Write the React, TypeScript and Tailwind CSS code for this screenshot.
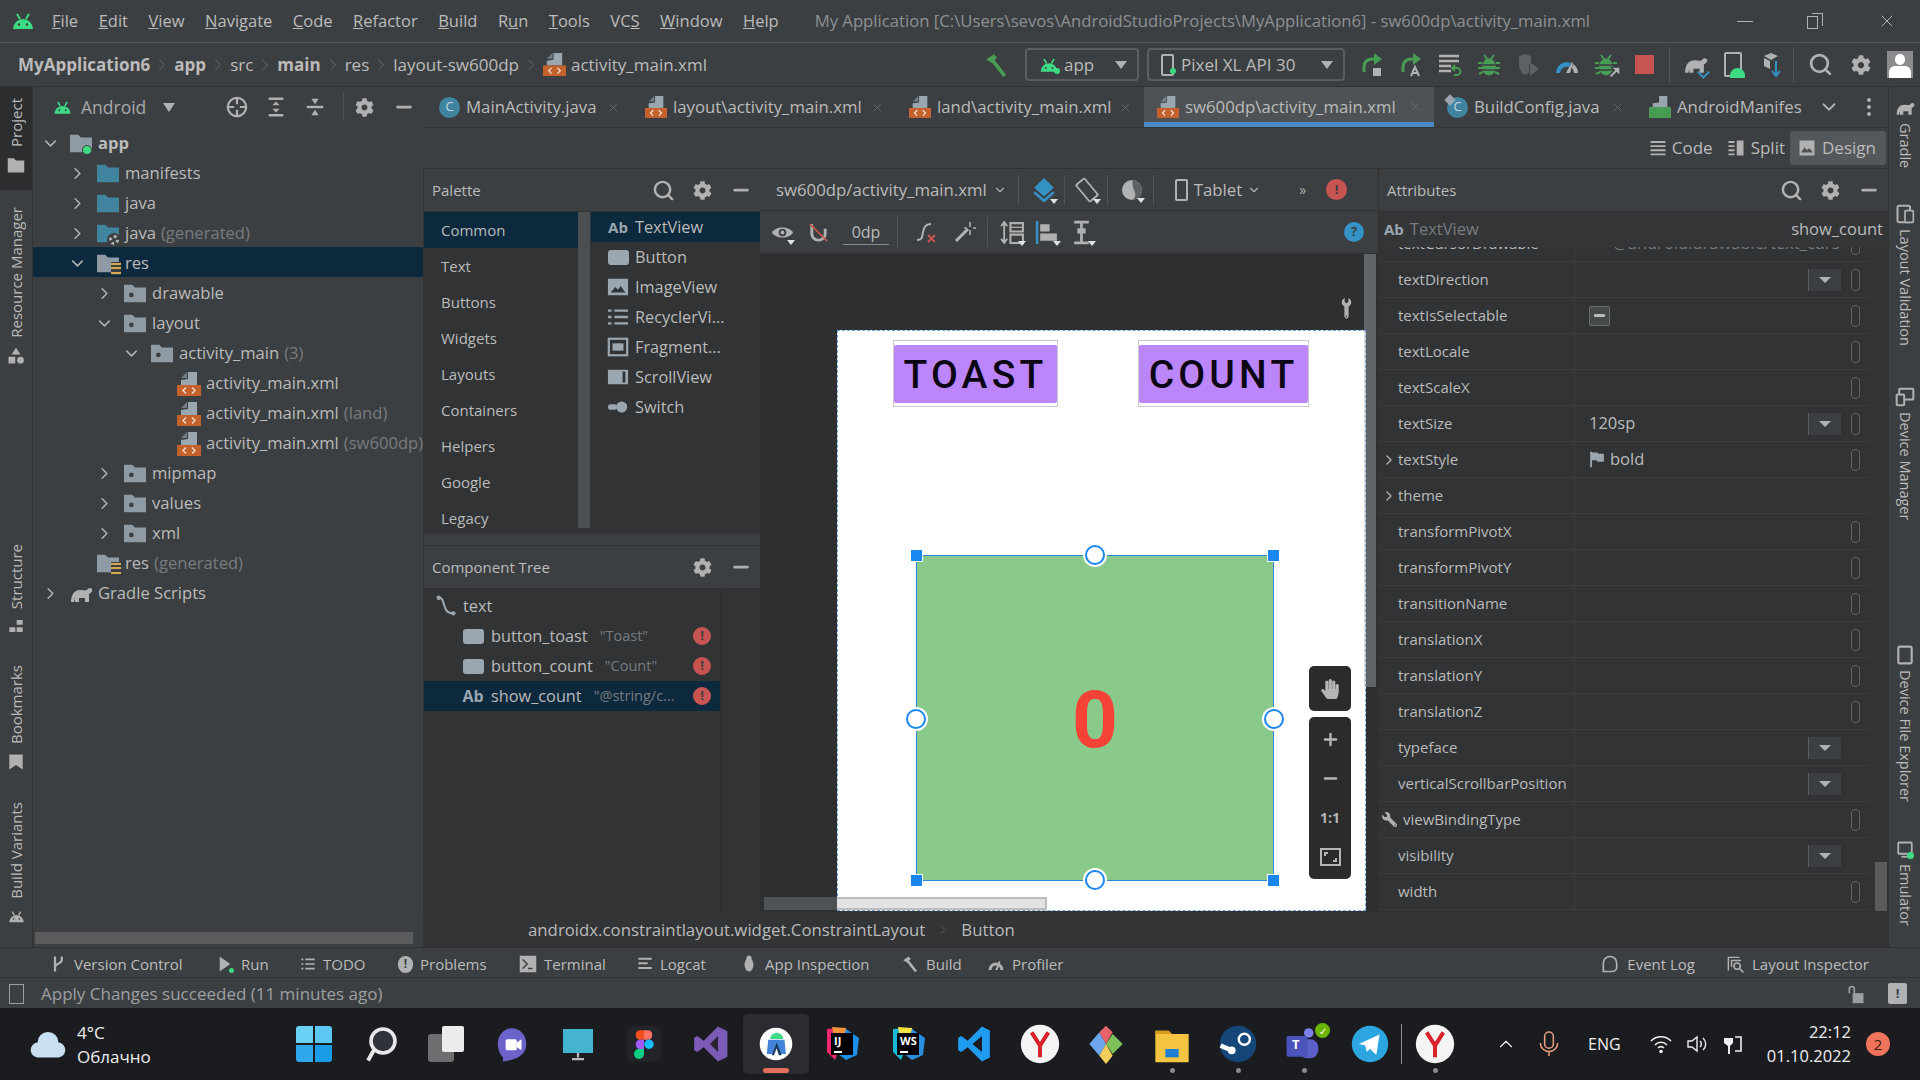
import { ChevronDown, ChevronRight, Minus, Plus, Search, X } from "lucide-react";
import { FaCog, FaHandPaper, FaWrench } from "react-icons/fa";
import type { ReactNode } from "react";

/* small IDE icons, all drawn in a 24 box */
function Svg({ s = 20, className = "", children }: { s?: number; className?: string; children: ReactNode }) {
  return (
    <svg width={s} height={s} viewBox="0 0 24 24" fill="none" className={`shrink-0 ${className}`}>
      {children}
    </svg>
  );
}

function Droid({ s = 20, c = "#3ddc84" }: { s?: number; c?: string }) {
  return (
    <Svg s={s}>
      <path d="M2 20a10 10 0 0 1 20 0z" fill={c} />
      <path d="M6 5l3 5M18 5l-3 5" stroke={c} strokeWidth="2" />
      <circle cx="8" cy="15.5" r="1.2" fill="#3c3f41" />
      <circle cx="16" cy="15.5" r="1.2" fill="#3c3f41" />
    </Svg>
  );
}

function XmlFile({ s = 24 }: { s?: number }) {
  return (
    <Svg s={s}>
      <path d="M11 0h9v13H4V8l7-1z" fill="#9aa7b0" />
      <path d="M10 0v6H4z" fill="#9aa7b0" opacity="0.6" />
      <rect x="0" y="13" width="24" height="11" fill="#c4622d" />
      <path d="M9 15.5l-3 3 3 3M15 15.5l3 3-3 3" stroke="#f3ddcf" strokeWidth="1.4" />
    </Svg>
  );
}

function ClassIcon({ tilt = false }: { tilt?: boolean }) {
  return (
    <div className="relative flex h-[21px] w-[21px] shrink-0 items-center justify-center rounded-full bg-[#40849f] text-[13px] text-[#c7dbe4]">
      C
      {tilt && <span className="absolute -left-px -top-px h-2 w-2 rotate-45 bg-[#9aa7b0]" />}
    </div>
  );
}

function Folder({ c = "#8e9ba5", dot = false, badge }: { c?: string; dot?: boolean; badge?: ReactNode }) {
  return (
    <div className="relative h-[22px] w-[22px] shrink-0">
      <Svg s={22}>
        <path d="M0 2h9l3 3h12v16H0z" fill={c} />
        {dot && <circle cx="8" cy="13" r="2.6" fill="#3c3f41" />}
      </Svg>
      {badge}
    </div>
  );
}

const StackBadge = () => (
  <div className="absolute -right-[2px] bottom-0 flex h-[13px] w-[10px] flex-col justify-between bg-[#3c3f41] py-px">
    <span className="h-[2px] bg-[#d5a84f]" />
    <span className="h-[2px] bg-[#d5a84f]" />
    <span className="h-[2px] bg-[#d5a84f]" />
  </div>
);

function Elephant({ s = 24, c = "#afb1b3" }: { s?: number; c?: string }) {
  return (
    <Svg s={s}>
      <path d="M2 20c0-7 3-12 9-12 3 0 5 1 7 0 1-2 3-3 5-1 1 2-1 4-3 5v8h-4v-4h-6v4H6v-4l-1 4z" fill={c} />
    </Svg>
  );
}

function ErrorDot({ s = 18 }: { s?: number }) {
  return (
    <div
      className="flex shrink-0 items-center justify-center rounded-full bg-[#c75450] text-[13px] font-bold text-[#3c3f41]"
      style={{ width: s, height: s }}
    >
      !
    </div>
  );
}

const Gear = ({ s = 18 }: { s?: number }) => <FaCog size={s} className="shrink-0 text-[#afb1b3]" />;
const Dash = () => <Minus size={22} strokeWidth={3} className="shrink-0 text-[#afb1b3]" />;
const Find = ({ s = 23 }: { s?: number }) => <Search size={s} strokeWidth={2.6} className="shrink-0 text-[#afb1b3]" />;

const Hammer = ({ s = 24, c = "#499c54" }: { s?: number; c?: string }) => (
  <Svg s={s}>
    <path d="M3 7l7-5 3 3-5 5z" fill={c} />
    <path d="M9 8l11 14" stroke={c} strokeWidth="3.5" />
  </Svg>
);

function Bug({ s = 24 }: { s?: number }) {
  return (
    <Svg s={s}>
      <ellipse cx="12" cy="14" rx="7" ry="8.5" fill="#499c54" />
      <path d="M7 2l3 4M17 2l-3 4M1 10h4M19 10h4M1 15h4M19 15h4M2 21l4-2M22 21l-4-2" stroke="#499c54" strokeWidth="2" />
      <path d="M5 12h14M5 17h14" stroke="#3c3f41" strokeWidth="1.5" />
    </Svg>
  );
}

const MENU: [string, string, string][] = [
  ["", "F", "ile"],
  ["", "E", "dit"],
  ["", "V", "iew"],
  ["", "N", "avigate"],
  ["", "C", "ode"],
  ["", "R", "efactor"],
  ["", "B", "uild"],
  ["R", "u", "n"],
  ["", "T", "ools"],
  ["VC", "S", ""],
  ["", "W", "indow"],
  ["", "H", "elp"],
];

function TitleBar() {
  return (
    <div className="flex h-[43px] shrink-0 items-center border-b border-[#55585a] bg-[#3c3f41] pl-[11px] text-[16.5px]">
      <Droid s={24} />
      <div className="ml-[17px] flex gap-[20.5px] text-[#bbbbbb]">
        {MENU.map(([a, u, b]) => (
          <span key={a + u + b}>
            {a}
            <u>{u}</u>
            {b}
          </span>
        ))}
      </div>
      <span className="ml-[36px] whitespace-nowrap text-[16.7px] text-[#8d9093]">
        My Application [C:\Users\sevos\AndroidStudioProjects\MyApplication6] - sw600dp\activity_main.xml
      </span>
      <div className="ml-auto mr-[23px] flex items-center gap-[54px] text-[#afb1b3]">
        <span className="h-px w-4 bg-[#afb1b3]" />
        <div className="relative h-4 w-4">
          <span className="absolute bottom-0 left-0 h-[13px] w-[11px] border border-[#afb1b3] bg-[#3c3f41]" />
          <span className="absolute right-0 top-0 h-[13px] w-[11px] border-r border-t border-[#afb1b3]" />
        </div>
        <X size={20} strokeWidth={1.2} />
      </div>
    </div>
  );
}

function Crumb({ children, bold }: { children: ReactNode; bold?: boolean }) {
  return (
    <>
      <span className={bold ? "font-bold text-[#bbbbbb]" : "text-[#bbbbbb]"}>{children}</span>
      <ChevronRight size={20} strokeWidth={1} className="mx-[2px] text-[#6f7376]" />
    </>
  );
}

function Slot({ children, w = "w-[39px]" }: { children: ReactNode; w?: string }) {
  return <div className={`flex shrink-0 items-center justify-center ${w}`}>{children}</div>;
}

function Dropdown({ className, children }: { className: string; children: ReactNode }) {
  return (
    <div className={`flex h-[33px] shrink-0 items-center justify-between rounded-[4px] border-2 border-[#5b5e60] pl-[12px] pr-[10px] ${className}`}>
      {children}
      <span className="h-0 w-0 border-x-[6px] border-t-[8px] border-x-transparent border-t-[#afb1b3]" />
    </div>
  );
}

function NavBar() {
  return (
    <div className="flex h-[44px] shrink-0 items-center border-b border-[#323232] bg-[#3c3f41] pl-[18px] text-[17px]">
      <Crumb bold>MyApplication6</Crumb>
      <Crumb bold>app</Crumb>
      <Crumb>src</Crumb>
      <Crumb bold>main</Crumb>
      <Crumb>res</Crumb>
      <Crumb>layout-sw600dp</Crumb>
      <XmlFile s={23} />
      <span className="ml-[5px]">activity_main.xml</span>
      <div className="ml-auto flex items-center">
        <Hammer s={26} />
        <Dropdown className="ml-[16px] w-[114px]">
          <div className="relative flex items-center gap-[5px]">
            <Droid s={20} />
            <span className="absolute bottom-[3px] left-[15px] h-[6px] w-[6px] rounded-full bg-[#3ddc84]" />
            <span>app</span>
          </div>
        </Dropdown>
        <Dropdown className="ml-[8px] w-[198px]">
          <div className="relative flex items-center gap-[4px]">
            <div className="h-[22px] w-[13px] rounded-[2px] border-2 border-[#afb1b3]" />
            <span className="absolute bottom-[3px] left-[9px] h-[6px] w-[6px] rounded-full bg-[#3ddc84]" />
            <span className="ml-[3px]">Pixel XL API 30</span>
          </div>
        </Dropdown>
        <div className="ml-[7px] flex items-center">
          <Slot>
            <Svg s={24}>
              <path d="M4 19v-5c0-5 3-8 9-8h2" stroke="#499c54" strokeWidth="3" />
              <path d="M14 0l8 6-8 6z" fill="#499c54" />
              <rect x="13" y="15" width="8" height="8" fill="#afb1b3" />
            </Svg>
          </Slot>
          <Slot>
            <Svg s={24}>
              <path d="M4 19v-5c0-5 3-8 9-8h2" stroke="#499c54" strokeWidth="3" />
              <path d="M14 0l8 6-8 6z" fill="#499c54" />
              <path d="M12 23l4-9 4 9M13.500 20h5" stroke="#afb1b3" strokeWidth="2" />
            </Svg>
          </Slot>
          <Slot>
            <Svg s={24}>
              <path d="M1 3h20M1 8h20M1 13h12M1 18h12" stroke="#afb1b3" strokeWidth="2.6" />
              <path d="M16 22h3a3 3 0 0 0 0-7h-4M17 12l-3 3 3 3" stroke="#499c54" strokeWidth="1.8" />
            </Svg>
          </Slot>
          <Slot>
            <Bug />
          </Slot>
          <Slot>
            <Svg s={24}>
              <path d="M3 3l6-2 6 2v6l-2 3v8l-4 2c-3-2-6-6-6-11z" fill="#5e6164" />
              <path d="M14 9l9 7-9 7z" fill="#5e6164" />
            </Svg>
          </Slot>
          <Slot>
            <Svg s={24}>
              <path d="M1 20a11 11 0 0 1 15-10l-2 4a7 7 0 0 0-9 6z" fill="#3592c4" />
              <path d="M18 11a11 11 0 0 1 5 9h-4a7 7 0 0 0-2-5z" fill="#afb1b3" />
              <path d="M11 20l6-11 1 1-3 10z" fill="#afb1b3" />
            </Svg>
          </Slot>
          <Slot>
            <div className="relative">
              <Bug />
              <svg width="13" height="13" viewBox="0 0 12 12" className="absolute -bottom-[2px] -right-[3px]">
                <path d="M11 1v8L8 6l-5 5-2-2 5-5-3-3z" fill="#afb1b3" stroke="#3c3f41" />
              </svg>
            </div>
          </Slot>
          <Slot>
            <div className="h-[19px] w-[19px] bg-[#c75450]" />
          </Slot>
          <span className="mx-[5px] h-[36px] w-px bg-[#515456]" />
          <Slot w="w-[40px]">
            <div className="relative">
              <Elephant s={25} />
              <span className="absolute bottom-0 right-0 h-[9px] w-[9px] rotate-45 border-b-2 border-r-2 border-[#3592c4]" />
            </div>
          </Slot>
          <Slot w="w-[36px]">
            <div className="relative h-[25px] w-[18px] rounded-[2px] border-2 border-[#afb1b3]">
              <span className="absolute -bottom-[3px] -right-[5px] h-[10px] w-[15px] rounded-t-full bg-[#3ddc84]" />
            </div>
          </Slot>
          <Slot w="w-[35px]">
            <Svg s={24}>
              <path d="M7 3l7-3 7 3-7 4z" fill="#afb1b3" />
              <path d="M7 5l6 3v8l-6-3z" fill="#afb1b3" />
              <path d="M19 8v14M15 18l4 5 4-5" stroke="#3592c4" strokeWidth="2" />
            </Svg>
          </Slot>
          <span className="mx-[7px] h-[36px] w-px bg-[#515456]" />
          <Slot>
            <Find s={25} />
          </Slot>
          <Slot w="w-[41px]">
            <Gear s={20} />
          </Slot>
          <div className="ml-[6px] mr-[7px] flex h-[27px] w-[26px] flex-col items-center justify-end overflow-hidden bg-[#8a8c8e]">
            <span className="h-[11px] w-[10px] rounded-full bg-white" />
            <span className="mt-px h-[12px] w-[22px] rounded-t-[6px] bg-white" />
          </div>
        </div>
      </div>
    </div>
  );
}

function SideTab({ label, icon, className = "", right }: { label: string; icon: ReactNode; className?: string; right?: boolean }) {
  return (
    <div className={`flex flex-col items-center ${right ? "gap-[5px]" : "gap-[9px]"} ${className}`}>
      {right && icon}
      <span
        className={`leading-none whitespace-nowrap text-[#bbbbbb] [writing-mode:vertical-rl] ${right ? "text-[14.5px]" : "rotate-180 text-[15px]"}`}
      >
        {label}
      </span>
      {!right && icon}
    </div>
  );
}

function LeftStrip() {
  return (
    <div className="flex w-[33px] shrink-0 flex-col justify-between border-r border-[#323232] bg-[#3c3f41]">
      <div className="flex flex-col">
        <SideTab
          label="Project"
          className="bg-[#2b2d2f] pb-[16px] pt-[11px]"
          icon={
            <Svg s={18}>
              <path d="M1 3h8l3 3h11v16H1z" fill="#afb1b3" />
            </Svg>
          }
        />
        <SideTab
          label="Resource Manager"
          className="mt-[17px]"
          icon={
            <Svg s={18}>
              <path d="M12 1l6 9H6z" fill="#afb1b3" />
              <rect x="2" y="13" width="9" height="9" fill="#afb1b3" />
              <circle cx="18" cy="17.5" r="4.5" fill="#afb1b3" />
            </Svg>
          }
        />
      </div>
      <div className="flex flex-col gap-[31px] pb-[22px]">
        <SideTab
          label="Structure"
          icon={
            <Svg s={16}>
              <path d="M13 3h9v7h-9zM2 14h9v7H2zM13 14h9v7h-9z" fill="#afb1b3" />
            </Svg>
          }
        />
        <SideTab
          label="Bookmarks"
          icon={
            <Svg s={18}>
              <path d="M3 2h18v20l-9-6-9 6z" fill="#afb1b3" />
            </Svg>
          }
        />
        <SideTab label="Build Variants" icon={<Droid s={17} c="#afb1b3" />} />
      </div>
    </div>
  );
}

type Node = { d: number; label: string; dim?: string; open?: boolean; leaf?: boolean; icon: ReactNode; bold?: boolean; sel?: boolean };

const TREE: Node[] = [
  {
    d: 0,
    label: "app",
    open: true,
    bold: true,
    icon: <Folder badge={<span className="absolute bottom-0 right-0 h-[10px] w-[10px] rounded-full border border-[#3c3f41] bg-[#3ddc84]" />} />,
  },
  { d: 1, label: "manifests", icon: <Folder c="#40849f" /> },
  { d: 1, label: "java", icon: <Folder c="#40849f" /> },
  {
    d: 1,
    label: "java",
    dim: "(generated)",
    icon: (
      <Folder
        c="#40849f"
        badge={
          <div className="absolute -bottom-[2px] -right-[2px] h-[14px] w-[14px] rounded-full bg-[#3c3f41]">
            <span className="absolute inset-[2px] rounded-full border-[3px] border-dotted border-[#afb1b3]" />
          </div>
        }
      />
    ),
  },
  { d: 1, label: "res", open: true, sel: true, icon: <Folder badge={<StackBadge />} /> },
  { d: 2, label: "drawable", icon: <Folder dot /> },
  { d: 2, label: "layout", open: true, icon: <Folder dot /> },
  { d: 3, label: "activity_main", dim: "(3)", open: true, icon: <Folder dot /> },
  { d: 4, label: "activity_main.xml", leaf: true, icon: <XmlFile /> },
  { d: 4, label: "activity_main.xml", dim: "(land)", leaf: true, icon: <XmlFile /> },
  { d: 4, label: "activity_main.xml", dim: "(sw600dp)", leaf: true, icon: <XmlFile /> },
  { d: 2, label: "mipmap", icon: <Folder dot /> },
  { d: 2, label: "values", icon: <Folder dot /> },
  { d: 2, label: "xml", icon: <Folder dot /> },
  { d: 1, label: "res", dim: "(generated)", leaf: true, icon: <Folder badge={<StackBadge />} /> },
  { d: 0, label: "Gradle Scripts", icon: <Elephant s={24} /> },
];

function ProjectPanel() {
  return (
    <div className="flex w-[390px] shrink-0 flex-col overflow-hidden bg-[#3c3f41] text-[16.6px]">
      <div className="flex h-[40px] shrink-0 items-center pl-[20px]">
        <Droid s={19} />
        <span className="ml-[9px] text-[17.5px] text-[#a7a9ab]">Android</span>
        <span className="ml-[17px] h-0 w-0 border-x-[6px] border-t-[9px] border-x-transparent border-t-[#afb1b3]" />
        <div className="ml-[51px] flex items-center gap-[17px]">
          <Svg s={22}>
            <circle cx="12" cy="12" r="10" stroke="#afb1b3" strokeWidth="2.4" />
            <path d="M12 1v8M12 15v8M1 12h8M15 12h8" stroke="#afb1b3" strokeWidth="2.4" />
          </Svg>
          <Svg s={22}>
            <path d="M4 3h16M4 21h16" stroke="#afb1b3" strokeWidth="2.6" />
            <path d="M12 6l4 4H8zM12 18l-4-4h8z" fill="#afb1b3" />
          </Svg>
          <Svg s={22}>
            <path d="M3 12h18" stroke="#afb1b3" strokeWidth="2.6" />
            <path d="M12 9L8 3h8zM12 15l4 6H8z" fill="#afb1b3" />
          </Svg>
          <span className="h-[28px] w-px bg-[#515456]" />
          <div className="-ml-[6px] mr-[2px]">
            <Gear s={19} />
          </div>
          <Dash />
        </div>
      </div>
      <div className="flex-1 overflow-hidden">
        {TREE.map((n, i) => (
          <div
            key={i}
            className={`flex h-[30px] items-center whitespace-nowrap pt-[3px] ${n.sel ? "bg-[#0d293e]" : ""}`}
            style={{ paddingLeft: 9 + 27 * n.d }}
          >
            <div className="flex w-[16px] shrink-0 justify-center">
              {!n.leaf &&
                (n.open ? (
                  <ChevronDown size={19} strokeWidth={2} className="shrink-0 text-[#afb1b3]" />
                ) : (
                  <ChevronRight size={19} strokeWidth={2} className="shrink-0 text-[#afb1b3]" />
                ))}
            </div>
            <div className="ml-[12px] flex w-[22px] shrink-0 justify-center">{n.icon}</div>
            <span className={`ml-[6px] ${n.bold ? "font-bold" : ""} text-[#bbbbbb]`}>{n.label}</span>
            {n.dim && <span className="ml-[5px] text-[#787b7e]">{n.dim}</span>}
          </div>
        ))}
      </div>
      <div className="mb-[3px] ml-[2px] mr-[10px] h-[12px] shrink-0 bg-[#595b5d]" />
    </div>
  );
}

const TABS: { label: string; w: string; icon: ReactNode; active?: boolean; fade?: boolean }[] = [
  { label: "MainActivity.java", w: "w-[206px]", icon: <ClassIcon /> },
  { label: "layout\\activity_main.xml", w: "w-[264px]", icon: <XmlFile s={22} /> },
  { label: "land\\activity_main.xml", w: "w-[248px]", icon: <XmlFile s={22} /> },
  { label: "sw600dp\\activity_main.xml", w: "w-[290px]", icon: <XmlFile s={22} />, active: true },
  { label: "BuildConfig.java", w: "w-[202px]", icon: <ClassIcon tilt /> },
  {
    label: "AndroidManifes",
    w: "w-[180px]",
    fade: true,
    icon: (
      <Svg s={22}>
        <path d="M11 0h9v13H4V8l7-1z" fill="#9aa7b0" />
        <rect x="0" y="12" width="24" height="12" fill="#499c54" />
      </Svg>
    ),
  },
];

function EditorTabs() {
  return (
    <div className="flex h-[41px] shrink-0 items-stretch border-b border-[#323232] bg-[#3c3f41] pl-[3px] text-[16.8px]">
      {TABS.map((t) => (
        <div
          key={t.label}
          className={`flex items-center gap-[6px] pl-[13px] ${t.w} ${t.active ? "border-b-[5px] border-[#4a88c7] bg-[#4e5254] pt-[4px]" : ""}`}
        >
          {t.icon}
          <span className="whitespace-nowrap text-[#bbbbbb]">{t.label}</span>
          {!t.fade && <X size={15} strokeWidth={1.2} className="ml-auto mr-[11px] text-[#6f7376]" />}
        </div>
      ))}
      <ChevronDown size={22} strokeWidth={2} className="ml-[2px] self-center text-[#afb1b3]" />
      <div className="ml-[27px] flex flex-col justify-center gap-[3px]">
        <span className="h-[4px] w-[4px] rounded-full bg-[#afb1b3]" />
        <span className="h-[4px] w-[4px] rounded-full bg-[#afb1b3]" />
        <span className="h-[4px] w-[4px] rounded-full bg-[#afb1b3]" />
      </div>
    </div>
  );
}

function ModeRow() {
  return (
    <div className="flex h-[41px] shrink-0 items-center justify-end border-b border-[#323232] bg-[#3c3f41] pr-[2px] text-[17px]">
      <Svg s={18}>
        <path d="M2 4h20M2 9.5h20M2 15h20M2 20.5h20" stroke="#afb1b3" strokeWidth="2.6" />
      </Svg>
      <span className="ml-[5px]">Code</span>
      <Svg s={18} className="ml-[14px]">
        <path d="M2 4h8M2 9.5h8M2 15h8M2 20.5h8" stroke="#afb1b3" strokeWidth="2.6" />
        <rect x="13" y="2" width="9" height="20" fill="#afb1b3" />
      </Svg>
      <span className="ml-[6px]">Split</span>
      <div className="ml-[5px] flex h-[34px] w-[96px] items-center gap-[6px] rounded-[3px] bg-[#54585a] pl-[8px]">
        <Svg s={18}>
          <rect x="2" y="2" width="20" height="20" fill="#afb1b3" />
          <path d="M4 18l5-7 3 4 3-3 5 6z" fill="#4e5254" />
        </Svg>
        <span>Design</span>
      </div>
    </div>
  );
}

const PALETTE_GROUPS = ["Common", "Text", "Buttons", "Widgets", "Layouts", "Containers", "Helpers", "Google", "Legacy"];

const WIDGETS: { label: string; icon: ReactNode }[] = [
  { label: "TextView", icon: <span className="text-[15px] font-bold text-[#9aa7b0]">Ab</span> },
  { label: "Button", icon: <span className="h-[15px] w-[21px] rounded-[3px] bg-[#9aa7b0]" /> },
  {
    label: "ImageView",
    icon: (
      <Svg s={22}>
        <rect x="1" y="3" width="22" height="18" fill="#9aa7b0" />
        <path d="M4 18l5-6 3 3 3-4 5 7z" fill="#313335" />
      </Svg>
    ),
  },
  {
    label: "RecyclerVi...",
    icon: (
      <Svg s={22}>
        <path d="M1 5h4M8 5h15M1 12h4M8 12h15M1 19h4M8 19h15" stroke="#9aa7b0" strokeWidth="2.6" />
      </Svg>
    ),
  },
  {
    label: "Fragment...",
    icon: (
      <Svg s={22}>
        <rect x="2" y="3" width="20" height="18" stroke="#9aa7b0" strokeWidth="2.4" />
        <rect x="6" y="8" width="12" height="8" fill="#9aa7b0" />
      </Svg>
    ),
  },
  {
    label: "ScrollView",
    icon: (
      <Svg s={22}>
        <rect x="1" y="4" width="22" height="16" rx="1" fill="#9aa7b0" />
        <rect x="17" y="6" width="3" height="12" fill="#313335" />
      </Svg>
    ),
  },
  {
    label: "Switch",
    icon: (
      <Svg s={22}>
        <rect x="1" y="9" width="10" height="6" rx="3" fill="#9aa7b0" />
        <circle cx="16" cy="12" r="6" fill="#9aa7b0" />
      </Svg>
    ),
  },
];

function PanelHeader({ title, search = true }: { title: string; search?: boolean }) {
  return (
    <div className="flex h-[43px] shrink-0 items-center border-b border-[#323232] bg-[#3c3f41] pl-[8px] pr-[8px] text-[15px]">
      <span className="text-[#bbbbbb]">{title}</span>
      <div className="ml-auto flex items-center gap-[18px]">
        {search && <Find />}
        <Gear s={19} />
        <Dash />
      </div>
    </div>
  );
}

function PaletteColumn() {
  return (
    <div className="flex w-[337px] shrink-0 flex-col border-l border-[#323232] bg-[#313335] text-[15px]">
      <PanelHeader title="Palette" />
      <div className="flex h-[322px] shrink-0">
        <div className="w-[154px] shrink-0">
          {PALETTE_GROUPS.map((g, i) => (
            <div key={g} className={`flex h-[36px] items-center pl-[17px] ${i === 0 ? "bg-[#0d293e]" : ""}`}>
              <span className="text-[15px] text-[#bbbbbb]">{g}</span>
            </div>
          ))}
        </div>
        <div className="mb-[6px] w-[12px] shrink-0 bg-[#4c4f51]" />
        <div className="flex-1 pl-px">
          {WIDGETS.map((w, i) => (
            <div key={w.label} className={`flex h-[30px] items-center ${i === 0 ? "bg-[#0d293e]" : ""}`}>
              <div className="ml-[16px] flex w-[22px] justify-center">{w.icon}</div>
              <span className="ml-[6px] text-[16.3px] text-[#bbbbbb]">{w.label}</span>
            </div>
          ))}
        </div>
      </div>
      <div className="h-[12px] shrink-0 border-b border-[#323232] bg-[#3c3f41]" />
      <PanelHeader title="Component Tree" search={false} />
      <div className="flex-1">
        <div className="h-full w-[297px] border-r border-[#2b2d2f] pt-[2px] text-[16.3px]">
          <div className="flex h-[30px] items-center pl-[11px]">
            <Svg s={22}>
              <path d="M4 3c4 0 4 2 6 8s3 9 10 9" stroke="#9aa7b0" strokeWidth="2.2" />
              <circle cx="4" cy="3" r="2.4" fill="#9aa7b0" />
              <circle cx="20" cy="20" r="2.4" fill="#9aa7b0" />
            </Svg>
            <span className="ml-[6px] text-[#bbbbbb]">text</span>
          </div>
          <TreeRow label="button_toast" hint={'"Toast"'} />
          <TreeRow label="button_count" hint={'"Count"'} />
          <TreeRow label="show_count" hint={'"@string/c...'} ab />
        </div>
      </div>
    </div>
  );
}

function TreeRow({ label, hint, ab }: { label: string; hint: string; ab?: boolean }) {
  return (
    <div className={`flex h-[30px] items-center pl-[38px] pr-[9px] ${ab ? "bg-[#0d293e]" : ""}`}>
      <div className="flex w-[22px] shrink-0 justify-center">
        {ab ? (
          <span className="text-[16px] font-bold text-[#9aa7b0]">Ab</span>
        ) : (
          <span className="h-[15px] w-[21px] rounded-[3px] bg-[#9aa7b0]" />
        )}
      </div>
      <span className="ml-[7px] whitespace-nowrap text-[#bbbbbb]">{label}</span>
      <span className="ml-[12px] whitespace-nowrap text-[14.5px] text-[#787b7e]">{hint}</span>
      <div className="ml-auto">
        <ErrorDot />
      </div>
    </div>
  );
}

function Caret() {
  return <span className="absolute -bottom-[1px] -right-[1px] h-0 w-0 border-x-[4px] border-t-[5px] border-x-transparent border-t-[#dfe1e5]" />;
}

function ToolBtn({ children, className = "" }: { children: ReactNode; className?: string }) {
  return <div className={`relative shrink-0 ${className}`}>{children}</div>;
}

const Sep = ({ className = "" }: { className?: string }) => <span className={`h-[30px] w-px shrink-0 bg-[#515456] ${className}`} />;

function DesignToolbars() {
  return (
    <>
      <div className="flex h-[42px] shrink-0 items-center border-b border-[#323232] bg-[#3c3f41] pl-[16px] text-[16.8px]">
        <span className="whitespace-nowrap">sw600dp/activity_main.xml</span>
        <ChevronDown size={14} className="ml-[6px] text-[#afb1b3]" />
        <Sep className="ml-[11px]" />
        <ToolBtn className="ml-[12px]">
          <Svg s={26}>
            <path d="M12 1l9 9-9 8-9-8z" fill="#3592c4" />
            <path d="M3 14l9 8 9-8" stroke="#3592c4" strokeWidth="2.4" />
          </Svg>
          <Caret />
        </ToolBtn>
        <Sep className="ml-[7px]" />
        <ToolBtn className="ml-[9px]">
          <Svg s={26}>
            <rect x="7" y="2" width="10" height="20" rx="1" transform="rotate(-40 12 12)" stroke="#afb1b3" strokeWidth="1.6" />
            <path d="M2 9a10 10 0 0 1 6-6M22 15a10 10 0 0 1-6 6" stroke="#afb1b3" strokeWidth="1.2" />
          </Svg>
          <Caret />
        </ToolBtn>
        <Sep className="ml-[7px]" />
        <ToolBtn className="ml-[12px]">
          <Svg s={24}>
            <circle cx="12" cy="12" r="10" fill="#afb1b3" />
            <path d="M12 2a10 10 0 0 1 0 20c4-3 4-5 2-10s-1-8-2-10z" fill="#5e6164" />
          </Svg>
          <Caret />
        </ToolBtn>
        <Sep className="ml-[9px]" />
        <div className="ml-[21px] h-[22px] w-[13px] rounded-[2px] border-2 border-[#afb1b3]" />
        <span className="ml-[6px]">Tablet</span>
        <ChevronDown size={14} className="ml-[5px] text-[#afb1b3]" />
        <span className="ml-[38px] text-[14px] text-[#afb1b3]">»</span>
        <div className="ml-[20px]">
          <ErrorDot s={21} />
        </div>
      </div>
      <div className="flex h-[43px] shrink-0 items-center border-b border-[#323232] bg-[#3c3f41] pl-[11px] text-[16px]">
        <ToolBtn>
          <Svg s={23}>
            <path d="M1 12c4-7 18-7 22 0-4 7-18 7-22 0z" fill="#afb1b3" />
            <circle cx="12" cy="12" r="4" fill="#3c3f41" />
            <circle cx="12" cy="12" r="2" fill="#afb1b3" />
          </Svg>
          <Caret />
        </ToolBtn>
        <ToolBtn className="ml-[13px]">
          <Svg s={23}>
            <path d="M5 3v10a7 7 0 0 0 14 0V8" stroke="#afb1b3" strokeWidth="3" />
            <path d="M3 3l18 18" stroke="#c75450" strokeWidth="1.6" />
          </Svg>
        </ToolBtn>
        <div className="ml-[13px] flex h-[25px] w-[46px] items-center justify-center border-b border-[#8a8d8f] text-[#bbbbbb]">
          0dp
        </div>
        <Sep className="ml-[8px]" />
        <ToolBtn className="ml-[16px]">
          <Svg s={24}>
            <path d="M3 20c6 0 5-4 6-8s2-8 8-8" stroke="#afb1b3" strokeWidth="2" />
            <path d="M14 15l7 7M21 15l-7 7" stroke="#c75450" strokeWidth="2" />
          </Svg>
        </ToolBtn>
        <ToolBtn className="ml-[15px]">
          <Svg s={24}>
            <path d="M3 21L15 9" stroke="#afb1b3" strokeWidth="3" />
            <path d="M17 2v5M17 10v5M11 8h3M20 8h3" stroke="#afb1b3" strokeWidth="1.6" />
          </Svg>
        </ToolBtn>
        <Sep className="ml-[10px]" />
        <ToolBtn className="ml-[12px]">
          <Svg s={25}>
            <path d="M4 3v18M1 6l3-4 3 4M1 18l3 4 3-4" stroke="#afb1b3" strokeWidth="1.8" />
            <path d="M10 3h12v8H10zM10 14h12v8H10z" stroke="#afb1b3" strokeWidth="2" />
            <path d="M10 7h12" stroke="#afb1b3" strokeWidth="1.2" />
          </Svg>
          <Caret />
        </ToolBtn>
        <ToolBtn className="ml-[10px]">
          <Svg s={25}>
            <path d="M2 1v22" stroke="#3592c4" strokeWidth="2.4" />
            <path d="M5 4h9v7H5zM5 13h16v7H5z" fill="#afb1b3" />
          </Svg>
          <Caret />
        </ToolBtn>
        <ToolBtn className="ml-[10px]">
          <Svg s={25}>
            <path d="M4 2h14M4 22h14M11 2v20" stroke="#afb1b3" strokeWidth="2.6" />
            <rect x="7" y="8" width="8" height="5" fill="#afb1b3" />
          </Svg>
          <Caret />
        </ToolBtn>
        <div className="ml-auto mr-[14px] flex h-[20px] w-[20px] items-center justify-center rounded-full bg-[#3592c4] text-[13px] font-bold text-[#3c3f41]">
          ?
        </div>
      </div>
    </>
  );
}

const Corner = ({ className }: { className: string }) => (
  <span className={`absolute h-[13px] w-[13px] border border-white bg-[#1a86f0] ${className}`} />
);
const Ring = ({ className }: { className: string }) => (
  <span className={`absolute h-[20px] w-[20px] rounded-full border-2 border-[#1a86f0] bg-white shadow-[0_0_0_2px_#ffffff] ${className}`} />
);

function Canvas() {
  return (
    <div className="relative flex-1 overflow-hidden bg-[#2d2f30]">
      {/* free design surface: everything here sits at its own place on the canvas */}
      <div className="absolute left-[77px] top-[76px] h-[581px] w-[529px] border border-dashed border-[#6aa5dc] bg-white font-['Roboto',sans-serif]">
        <div className="absolute left-[55px] top-[9px] h-[67px] w-[165px] border border-[#c9c9c9] py-[4px]">
          <div className="flex h-[58px] items-center justify-center rounded-[2px] bg-[#bb86fc] pt-[3px] text-[39px] font-medium tracking-[4.2px] text-[#0c0614]">
            TOAST
          </div>
        </div>
        <div className="absolute left-[300px] top-[9px] h-[67px] w-[171px] border border-[#c9c9c9] py-[4px]">
          <div className="flex h-[58px] items-center justify-center rounded-[2px] bg-[#bb86fc] pt-[3px] text-[39px] font-medium tracking-[4.2px] text-[#0c0614]">
            COUNT
          </div>
        </div>
        <div className="absolute left-[78px] top-[224px] flex h-[326px] w-[358px] items-center justify-center border-[1.5px] border-[#2a87dc] bg-[#89ca8a] pt-[4px] text-[80px] font-bold leading-none text-[#f44336]">
          0
        </div>
        <Corner className="left-[72px] top-[218px]" />
        <Corner className="left-[429px] top-[218px]" />
        <Corner className="left-[72px] top-[543px]" />
        <Corner className="left-[429px] top-[543px]" />
        <Ring className="left-[247px] top-[214px]" />
        <Ring className="left-[247px] top-[539px]" />
        <Ring className="left-[68px] top-[378px]" />
        <Ring className="left-[426px] top-[378px]" />
      </div>

      <FaWrench size={17} className="absolute left-[578px] top-[45px] -rotate-45 text-[#afb1b3]" />

      <div className="absolute left-[549px] top-[412px] flex h-[45px] w-[42px] items-center justify-center rounded-[5px] bg-[#2b2b2b]">
        <FaHandPaper size={20} className="text-[#b5b5b5]" />
      </div>
      <div className="absolute left-[549px] top-[463px] flex h-[162px] w-[42px] flex-col items-center rounded-[5px] bg-[#2b2b2b] pt-[3px] text-[#b5b5b5]">
        <div className="flex h-[39px] items-center">
          <Plus size={19} strokeWidth={3} />
        </div>
        <div className="flex h-[39px] items-center">
          <Minus size={19} strokeWidth={3} />
        </div>
        <div className="flex h-[39px] items-center text-[14px] font-bold">1:1</div>
        <div className="flex h-[39px] items-center">
          <div className="relative h-[18px] w-[21px] border-2 border-[#b5b5b5]">
            <span className="absolute left-[2px] top-[2px] h-[4px] w-[4px] border-l-2 border-t-2 border-[#b5b5b5]" />
            <span className="absolute bottom-[2px] right-[2px] h-[4px] w-[4px] border-b-2 border-r-2 border-[#b5b5b5]" />
          </div>
        </div>
      </div>

      <div className="absolute right-[2px] top-0 h-[433px] w-[12px] bg-[#a9b4bd]/40" />
      <div className="absolute bottom-px left-[4px] flex h-[13px] w-[283px]">
        <div className="h-full w-[73px] bg-[#4f5254]" />
        <div className="h-full flex-1 border-y-2 border-r-2 border-[#bdbdbd] bg-[#e3e3e3]" />
      </div>
    </div>
  );
}

type Attr = { name: string; chev?: boolean; wrench?: boolean; value?: string; drop?: boolean; pill?: boolean; check?: boolean; flag?: boolean; dim?: boolean };

const ATTRS: Attr[] = [
  { name: "textCursorDrawable", value: "@android:drawable/text_curs", dim: true, pill: true },
  { name: "textDirection", drop: true, pill: true },
  { name: "textIsSelectable", check: true, pill: true },
  { name: "textLocale", pill: true },
  { name: "textScaleX", pill: true },
  { name: "textSize", value: "120sp", drop: true, pill: true },
  { name: "textStyle", chev: true, value: "bold", flag: true, pill: true },
  { name: "theme", chev: true },
  { name: "transformPivotX", pill: true },
  { name: "transformPivotY", pill: true },
  { name: "transitionName", pill: true },
  { name: "translationX", pill: true },
  { name: "translationY", pill: true },
  { name: "translationZ", pill: true },
  { name: "typeface", drop: true },
  { name: "verticalScrollbarPosition", drop: true },
  { name: "viewBindingType", wrench: true, pill: true },
  { name: "visibility", drop: true },
  { name: "width", pill: true },
];

function AttrRow({ a }: { a: Attr }) {
  return (
    <div className="flex h-[36px] shrink-0 items-center border-b border-[#3a3d3f]">
      <div className="relative flex h-full w-[196px] shrink-0 items-center border-r border-[#3a3d3f] pl-[19px]">
        {a.chev && <ChevronRight size={16} strokeWidth={2} className="absolute left-[2px] text-[#afb1b3]" />}
        {a.wrench && <FaWrench size={15} className="absolute left-[3px] -scale-x-100 text-[#afb1b3]" />}
        <span className={`whitespace-nowrap text-[#bbbbbb] ${a.wrench ? "ml-[5px]" : ""}`}>{a.name}</span>
      </div>
      <div className="relative flex h-full flex-1 items-center pl-[14px]">
        {a.check && (
          <div className="flex h-[20px] w-[21px] items-center justify-center rounded-[2px] border border-[#6b6e70] bg-[#45494a]">
            <span className="h-[3px] w-[11px] rounded-[1px] bg-[#bbbbbb]" />
          </div>
        )}
        {a.flag && (
          <Svg s={17}>
            <path d="M3 1v22" stroke="#9aa7b0" strokeWidth="2.6" />
            <path d="M4 2h8l1 2h8v11H12l-1-2H4z" fill="#9aa7b0" />
          </Svg>
        )}
        {a.value && (
          <span className={`whitespace-nowrap text-[16.500px] ${a.dim ? "ml-[24px] text-[#787b7e]" : a.flag ? "ml-[4px] text-[#bbbbbb]" : "text-[#bbbbbb]"}`}>
            {a.value}
          </span>
        )}
        {a.drop && (
          <div className="absolute left-[233px] flex h-[22px] w-[33px] items-center justify-center border-l border-[#5b5e60] bg-[#3c3f41]">
            <span className="h-0 w-0 border-x-[6px] border-t-[6px] border-x-transparent border-t-[#afb1b3]" />
          </div>
        )}
        {a.pill && <span className="absolute left-[276px] h-[22px] w-[9px] rounded-[4px] border-[1.5px] border-[#5e6164]" />}
      </div>
    </div>
  );
}

function AttributesColumn() {
  return (
    <div className="flex w-[510px] shrink-0 flex-col border-l border-[#323232] bg-[#313335] text-[15px]">
      <PanelHeader title="Attributes" />
      <div className="flex h-[35px] shrink-0 items-center justify-between bg-[#333537] pl-[5px] pr-[5px] text-[16.500px]">
        <div className="flex items-center gap-[6px]">
          <span className="text-[15px] font-bold text-[#9aa7b0]">Ab</span>
          <span className="text-[#787b7e]">TextView</span>
        </div>
        <span className="text-[#bbbbbb]">show_count</span>
      </div>
      <div className="relative flex-1 overflow-hidden">
        <div className="-mt-[21px] w-[490px]">
          {ATTRS.map((a) => (
            <AttrRow key={a.name} a={a} />
          ))}
        </div>
        <div className="absolute bottom-0 right-px h-[49px] w-[12px] bg-[#595b5d]" />
      </div>
    </div>
  );
}

function RightStrip() {
  return (
    <div className="flex w-[32px] shrink-0 flex-col border-l border-[#323232] bg-[#3c3f41] pt-[11px]">
      <SideTab right label="Gradle" icon={<Elephant s={20} />} />
      <SideTab
        right
        className="mt-[36px]"
        label="Layout Validation"
        icon={
          <Svg s={20}>
            <rect x="3" y="2" width="15" height="20" rx="2" stroke="#afb1b3" strokeWidth="2.4" />
            <rect x="12" y="8" width="10" height="14" rx="1" fill="#3c3f41" stroke="#afb1b3" strokeWidth="2" />
          </Svg>
        }
      />
      <SideTab
        right
        className="mt-[41px]"
        label="Device Manager"
        icon={
          <Svg s={20}>
            <rect x="5" y="2" width="17" height="13" rx="1" stroke="#afb1b3" strokeWidth="2.4" />
            <rect x="2" y="9" width="9" height="13" rx="1" fill="#3c3f41" stroke="#afb1b3" strokeWidth="2.4" />
          </Svg>
        }
      />
      <SideTab
        right
        className="mt-[125px]"
        label="Device File Explorer"
        icon={
          <Svg s={20}>
            <rect x="4" y="2" width="16" height="20" rx="2" stroke="#afb1b3" strokeWidth="2.6" />
          </Svg>
        }
      />
      <SideTab
        right
        className="mt-[38px]"
        label="Emulator"
        icon={
          <div className="relative">
            <Svg s={18}>
              <rect x="3" y="2" width="18" height="15" rx="1" stroke="#afb1b3" strokeWidth="2.4" />
              <path d="M7 21h10" stroke="#afb1b3" strokeWidth="2.4" />
            </Svg>
            <span className="absolute bottom-0 right-0 h-[7px] w-[7px] rounded-full bg-[#3ddc84]" />
          </div>
        }
      />
    </div>
  );
}

function Tool({ icon, label, className }: { icon: ReactNode; label: string; className: string }) {
  return (
    <div className={`flex items-center gap-[7px] ${className}`}>
      {icon}
      <span className="whitespace-nowrap">{label}</span>
    </div>
  );
}

function ToolStrip() {
  return (
    <div className="flex h-[31px] shrink-0 items-center border-y border-[#323232] bg-[#3c3f41] pl-[49px] pr-[51px] pt-[3px] text-[15px] text-[#bbbbbb]">
      <Tool
        label="Version Control"
        className="w-[167px]"
        icon={
          <Svg s={18}>
            <path d="M8 2v20M17 2v5c0 4-9 5-9 9" stroke="#afb1b3" strokeWidth="3" />
          </Svg>
        }
      />
      <Tool
        label="Run"
        className="w-[84px]"
        icon={
          <div className="relative">
            <Svg s={18}>
              <path d="M5 2l14 10L5 22z" fill="#afb1b3" />
            </Svg>
            <span className="absolute bottom-0 right-0 h-[5px] w-[5px] rounded-full bg-[#3ddc84]" />
          </div>
        }
      />
      <Tool
        label="TODO"
        className="w-[98px]"
        icon={
          <Svg s={16}>
            <path d="M2 5h3M8 5h14M2 12h3M8 12h14M2 19h3M8 19h14" stroke="#afb1b3" strokeWidth="2.6" />
          </Svg>
        }
      />
      <Tool
        label="Problems"
        className="w-[121px]"
        icon={
          <div className="flex h-[17px] w-[15px] items-center justify-center rounded-full bg-[#afb1b3] text-[12px] font-bold text-[#3c3f41]">!</div>
        }
      />
      <Tool
        label="Terminal"
        className="w-[118px]"
        icon={
          <Svg s={18}>
            <rect x="1" y="1" width="22" height="22" fill="#afb1b3" />
            <path d="M5 6l6 6-6 6M12 18h6" stroke="#3c3f41" strokeWidth="2" />
          </Svg>
        }
      />
      <Tool
        label="Logcat"
        className="w-[103px]"
        icon={
          <Svg s={16}>
            <path d="M2 4h20M2 11h14M2 18h20" stroke="#afb1b3" strokeWidth="3" />
          </Svg>
        }
      />
      <Tool
        label="App Inspection"
        className="w-[161px]"
        icon={
          <Svg s={18}>
            <ellipse cx="12" cy="13" rx="6" ry="9" fill="#afb1b3" />
            <circle cx="12" cy="4" r="3.5" fill="#afb1b3" />
          </Svg>
        }
      />
      <Tool label="Build" className="w-[86px]" icon={<Hammer s={18} c="#afb1b3" />} />
      <Tool
        label="Profiler"
        className="w-[90px]"
        icon={
          <Svg s={18}>
            <path d="M2 20a10 10 0 0 1 20 0h-4a6 6 0 0 0-12 0z" fill="#afb1b3" />
            <path d="M11 20l5-12 2 1-4 11z" fill="#afb1b3" />
          </Svg>
        }
      />
      <div className="ml-auto flex items-center gap-[31px]">
        <Tool
          label="Event Log"
          className=""
          icon={
            <Svg s={20}>
              <path d="M4 21V11a8 8 0 0 1 16 0v5a5 5 0 0 1-5 5z" stroke="#afb1b3" strokeWidth="2" />
            </Svg>
          }
        />
        <Tool
          label="Layout Inspector"
          className=""
          icon={
            <Svg s={19}>
              <path d="M3 20V3h14M7 15V7h12" stroke="#afb1b3" strokeWidth="1.8" />
              <circle cx="14" cy="14" r="4" stroke="#afb1b3" strokeWidth="2" />
              <path d="M17 17l5 5" stroke="#afb1b3" strokeWidth="2" />
            </Svg>
          }
        />
      </div>
    </div>
  );
}

function StatusBar() {
  return (
    <div className="flex h-[30px] shrink-0 items-center bg-[#3c3f41] pl-[9px] pr-[13px] pt-[1px] text-[17px] text-[#9c9fa2]">
      <div className="flex h-[20px] w-[15px] border border-[#9c9fa2]" />
      <span className="ml-[17px] whitespace-nowrap">Apply Changes succeeded (11 minutes ago)</span>
      <div className="ml-auto flex items-center gap-[22px]">
        <Svg s={20}>
          <rect x="8" y="11" width="13" height="12" fill="#9c9fa2" />
          <path d="M4 11V6a3 3 0 0 1 6 0v5" stroke="#9c9fa2" strokeWidth="2" />
        </Svg>
        <div className="flex h-[21px] w-[19px] items-center justify-center rounded-[2px] bg-[#afb1b3] text-[13px] font-bold text-[#3c3f41]">!</div>
      </div>
    </div>
  );
}

function JetBrains({ label, a, b, c }: { label: string; a: string; b: string; c: string }) {
  return (
    <div className="relative h-[36px] w-[36px]">
      <svg width="36" height="36" viewBox="0 0 36 36" className="absolute inset-0">
        <path d="M3 3l14-1 4 8-10 24-8-8z" fill={a} />
        <path d="M8 1l14 1 2 10H10z" fill={b} />
        <path d="M22 3l13 9-2 17-11 5-8-6z" fill={c} />
      </svg>
      <div className="absolute left-[7px] top-[7px] flex h-[22px] w-[22px] flex-col justify-between bg-black px-[3px] py-[2px] text-[11px] font-bold leading-[12px] text-white">
        {label}
        <span className="h-[2px] w-[8px] bg-white" />
      </div>
    </div>
  );
}

const Yandex = () => (
  <Svg s={40}>
    <circle cx="12" cy="12" r="11.5" fill="#f4f4f4" />
    <path d="M7 5l5 8 5-8M12 13v7" stroke="#d8232a" strokeWidth="2.4" />
  </Svg>
);

const DOCK: { key: string; icon: ReactNode; dot?: boolean; active?: boolean }[] = [
  {
    key: "win",
    icon: (
      <div className="grid h-[36px] w-[36px] grid-cols-2 gap-[2px]">
        <span className="rounded-tl-[3px] bg-[#6ad3f5]" />
        <span className="rounded-tr-[3px] bg-[#5bc8f3]" />
        <span className="rounded-bl-[3px] bg-[#2fa8ec]" />
        <span className="rounded-br-[3px] bg-[#1a9be6]" />
      </div>
    ),
  },
  {
    key: "search",
    icon: (
      <Svg s={36}>
        <circle cx="14" cy="10" r="8" stroke="#e8e8e8" strokeWidth="2.4" fill="#30323a" />
        <path d="M8 16l-4 7" stroke="#e8e8e8" strokeWidth="2.6" />
      </Svg>
    ),
  },
  {
    key: "view",
    icon: (
      <div className="relative h-[36px] w-[36px]">
        <span className="absolute bottom-0 left-0 h-[28px] w-[26px] rounded-[3px] bg-[#6e6e70]" />
        <span className="absolute right-0 top-0 h-[26px] w-[22px] rounded-[2px] bg-[#ececec]" />
      </div>
    ),
  },
  {
    key: "meet",
    icon: (
      <Svg s={38}>
        <path d="M3 12a9 10 0 0 1 18 0c0 7-6 10-15 11 1-2 0-3-1-4-1-2-2-4-2-7z" fill="#6b63c9" />
        <rect x="8" y="9" width="7" height="7" rx="1" fill="#fff" />
        <path d="M15 11l3-2v7l-3-2z" fill="#fff" />
      </Svg>
    ),
  },
  {
    key: "desk",
    icon: (
      <Svg s={36}>
        <rect x="2" y="2" width="20" height="16" fill="#45b5cf" />
        <path d="M12 18v3M8 22h8" stroke="#bbbbbb" strokeWidth="1.5" />
      </Svg>
    ),
  },
  {
    key: "figma",
    icon: (
      <div className="flex h-[36px] w-[34px] items-center justify-center rounded-[5px] bg-[#22242a]">
        <Svg s={30}>
          <path d="M12 1H8a4 4 0 0 0 0 7.500h4z" fill="#f24e1e" />
          <path d="M12 1h4a4 4 0 0 1 0 7.500h-4z" fill="#ff7262" />
          <path d="M12 8.500H8a4 4 0 0 0 0 7.500h4z" fill="#a259ff" />
          <circle cx="16" cy="12.200" r="3.800" fill="#1abcfe" />
          <path d="M8 16h4v4a4 4 0 1 1-4-4z" fill="#0acf83" />
        </Svg>
      </div>
    ),
  },
  {
    key: "vs",
    icon: (
      <Svg s={38}>
        <path d="M17 1l6 3v16l-6 3-9-9-4 3-2-1V8l2-1 4 3z" fill="#7b5bb5" />
        <path d="M17 7l-5 5 5 5z" fill="#2a2430" />
      </Svg>
    ),
  },
  {
    key: "as",
    active: true,
    icon: (
      <Svg s={34}>
        <circle cx="12" cy="12" r="11.500" fill="#ffffff" />
        <path d="M8 8.500a4.500 4.500 0 0 1 9 0z" fill="#3ddc84" />
        <path d="M6.500 9H18l1 10h-4l-2.500-7-3 7h-4z" fill="#4285d8" />
        <path d="M12.500 11l3.500 9h-2l-1.500-5-2 5H9z" fill="#17375e" />
      </Svg>
    ),
  },
  { key: "ij", icon: <JetBrains label="IJ" a="#f0276c" b="#f5913a" c="#1d8fe8" /> },
  { key: "ws", icon: <JetBrains label="WS" a="#16b9d8" b="#f5e342" c="#2a8fe0" /> },
  {
    key: "code",
    icon: (
      <Svg s={38}>
        <path d="M17 1l5 2.500v17L17 23 8 14l-4 3-2-1V8l2-1 4 3z" fill="#1f9cf0" />
        <path d="M17 7l-6 5 6 5z" fill="#1b1c20" />
      </Svg>
    ),
  },
  { key: "ya", icon: <Yandex /> },
  {
    key: "kraken",
    icon: (
      <Svg s={40}>
        <path d="M8 5l4 7-4 7-6-7z" fill="#6ea6ec" />
        <path d="M16 6l6 6-6 6-4-6z" fill="#7ec05a" />
        <path d="M12 12l4 7-4 5-4-5z" fill="#f2cf5b" />
        <path d="M8 5l4-4 4 4-4 7z" fill="#e8646a" />
      </Svg>
    ),
  },
  {
    key: "files",
    dot: true,
    icon: (
      <Svg s={40}>
        <path d="M2 4h8l2 2h10v17H2z" fill="#f5c542" />
        <path d="M2 4h8l2 2H2z" fill="#d69a1c" />
        <rect x="8" y="15" width="8" height="5" fill="#1f7fd6" />
      </Svg>
    ),
  },
  {
    key: "steam",
    dot: true,
    icon: (
      <Svg s={38}>
        <circle cx="12" cy="12" r="11.500" fill="#14467a" />
        <circle cx="16" cy="9" r="3.500" stroke="#fff" strokeWidth="1.500" />
        <path d="M1 13l7 3" stroke="#fff" strokeWidth="3" />
        <circle cx="8" cy="16" r="2.500" fill="#fff" />
      </Svg>
    ),
  },
  {
    key: "teams",
    dot: true,
    icon: (
      <div className="relative">
        <Svg s={38}>
          <circle cx="15" cy="5" r="3" fill="#7b83eb" />
          <rect x="9" y="9" width="12" height="12" rx="5" fill="#5b5fc7" />
          <rect x="1" y="7" width="13" height="13" rx="1" fill="#4b53bc" />
        </Svg>
        <span className="absolute left-[7px] top-[13px] text-[13px] font-bold leading-none text-white">T</span>
        <span className="absolute -right-[7px] -top-[2px] flex h-[15px] w-[15px] items-center justify-center rounded-full bg-[#6bb700] text-[10px] leading-none text-white">✓</span>
      </div>
    ),
  },
  {
    key: "tg",
    icon: (
      <Svg s={38}>
        <circle cx="12" cy="12" r="11.500" fill="#2ca5e0" />
        <path d="M5 12l13-6-2 13-4-4-2 2-1-4z" fill="#ffffff" />
      </Svg>
    ),
  },
];

function Taskbar() {
  return (
    <div className="flex h-[72px] shrink-0 items-center bg-[#1b1c20] text-[#eeeeee]">
      <div className="flex w-[281px] shrink-0 items-center pl-[30px]">
        <Svg s={36}>
          <path d="M6 21a5 5 0 0 1-1-10 7 7 0 0 1 14 0 5 5 0 0 1-1 10z" fill="#c9dff2" />
        </Svg>
        <div className="ml-[11px] flex flex-col pt-[2px] text-[17px] leading-[24px]">
          <span>4°C</span>
          <span>Облачно</span>
        </div>
      </div>
      <div className="flex">
        {DOCK.map((d) => (
          <div
            key={d.key}
            className={`relative flex h-[60px] w-[66px] items-center justify-center ${d.active ? "rounded-[5px] bg-[#2b2c31]" : ""}`}
          >
            {d.icon}
            {d.active && <span className="absolute bottom-[1px] h-[5px] w-[26px] rounded-[3px] bg-[#e0705c]" />}
            {d.dot && <span className="absolute bottom-[1px] h-[5px] w-[5px] rounded-full bg-[#8a8a8a]" />}
          </div>
        ))}
      </div>
      <span className="ml-[-2px] h-[40px] w-px bg-[#8a8a8a]" />
      <div className="relative ml-[13px] flex h-[60px] w-[40px] items-center justify-center">
        <Yandex />
        <span className="absolute bottom-[1px] h-[5px] w-[5px] rounded-full bg-[#8a8a8a]" />
      </div>
      <ChevronDown size={22} strokeWidth={1.2} className="ml-[40px] rotate-180" />
      <Svg s={26} className="ml-[19px]">
        <rect x="8" y="1" width="8" height="15" rx="4" stroke="#e8a07c" strokeWidth="1.400" />
        <path d="M4 11a8 8 0 0 0 16 0M12 19v4" stroke="#e8a07c" strokeWidth="1.400" />
      </Svg>
      <span className="ml-[26px] text-[16px]">ENG</span>
      <Svg s={24} className="ml-[28px]">
        <path d="M2 9a14 14 0 0 1 20 0M6 13a8 8 0 0 1 12 0M9 16a4 4 0 0 1 6 0" stroke="#eeeeee" strokeWidth="1.600" />
        <circle cx="12" cy="19.500" r="1.800" fill="#eeeeee" />
      </Svg>
      <Svg s={24} className="ml-[12px]">
        <path d="M3 9h4l5-4v14l-5-4H3z" stroke="#eeeeee" strokeWidth="1.400" />
        <path d="M15 9a4 4 0 0 1 0 6M18 6a8 8 0 0 1 0 12" stroke="#eeeeee" strokeWidth="1.400" />
      </Svg>
      <Svg s={24} className="ml-[12px]">
        <path d="M5 2v4M10 2v4M3 6h9v5l-3 3v8H7v-8l-4-3z" fill="#eeeeee" />
        <path d="M14 5h6v14h-6" stroke="#eeeeee" strokeWidth="1.600" />
      </Svg>
      <div className="ml-auto flex flex-col items-end text-[16.500px] leading-[24px]">
        <span>22:12</span>
        <span>01.10.2022</span>
      </div>
      <div className="ml-[15px] mr-[30px] flex h-[24px] w-[24px] items-center justify-center rounded-full bg-[#f0745c] text-[15px] text-[#3a1a12]">
        2
      </div>
    </div>
  );
}

export default function App() {
  return (
    <div className="flex h-[1080px] w-[1920px] flex-col overflow-hidden bg-[#3c3f41] font-['Open_Sans',sans-serif] text-[#bbbbbb]">
      <TitleBar />
      <NavBar />
      <div className="flex h-[860px] shrink-0">
        <LeftStrip />
        <ProjectPanel />
        <div className="flex min-w-0 flex-1 flex-col">
          <EditorTabs />
          <ModeRow />
          <div className="flex min-h-0 flex-1">
            <PaletteColumn />
            <div className="flex w-[618px] shrink-0 flex-col">
              <DesignToolbars />
              <Canvas />
            </div>
            <AttributesColumn />
          </div>
          <div className="flex h-[36px] shrink-0 items-center border-t border-[#323232] bg-[#323436] pl-[105px] text-[16.800px]">
            <span className="whitespace-nowrap">androidx.constraintlayout.widget.ConstraintLayout</span>
            <ChevronRight size={14} strokeWidth={1} className="mx-[11px] text-[#6f7376]" />
            <span>Button</span>
          </div>
        </div>
        <RightStrip />
      </div>
      <ToolStrip />
      <StatusBar />
      <Taskbar />
    </div>
  );
}
